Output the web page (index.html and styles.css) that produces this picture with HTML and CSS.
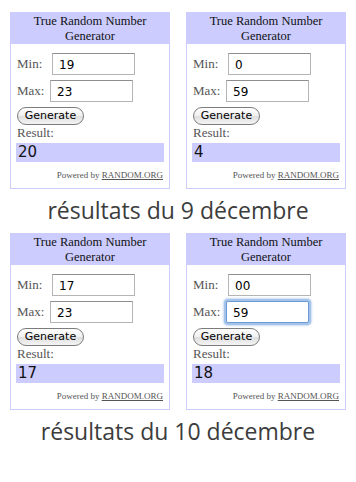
FILE: index.html
```html
<!DOCTYPE html>
<html lang="fr">
<head>
    <meta charset="UTF-8">
    <title>Tirage au sort</title>
    <link rel="stylesheet" href="styles.css">
</head>
<body>

<div class="page">
    <!-- 9 décembre -->
    <div class="row">
        <div class="rng">
            <div class="rng-head">True Random Number<br>Generator</div>
            <div class="rng-body">
                <div class="field"><span class="lbl">Min:</span><input class="num min" type="text" value="19"></div>
                <div class="field"><span class="lbl">Max:</span><input class="num" type="text" value="23"></div>
                <button class="gen">Generate</button>
                <div class="lbl res-lbl">Result:</div>
                <div class="result">20</div>
                <div class="powered">Powered by <a href="#">RANDOM.ORG</a></div>
            </div>
        </div>
        <div class="rng">
            <div class="rng-head">True Random Number<br>Generator</div>
            <div class="rng-body">
                <div class="field"><span class="lbl">Min:</span><input class="num min" type="text" value="0"></div>
                <div class="field"><span class="lbl">Max:</span><input class="num" type="text" value="59"></div>
                <button class="gen">Generate</button>
                <div class="lbl res-lbl">Result:</div>
                <div class="result">4</div>
                <div class="powered">Powered by <a href="#">RANDOM.ORG</a></div>
            </div>
        </div>
    </div>
    <p class="caption">résultats du 9 décembre</p>

    <!-- 10 décembre -->
    <div class="row">
        <div class="rng">
            <div class="rng-head">True Random Number<br>Generator</div>
            <div class="rng-body">
                <div class="field"><span class="lbl">Min:</span><input class="num min" type="text" value="17"></div>
                <div class="field"><span class="lbl">Max:</span><input class="num" type="text" value="23"></div>
                <button class="gen">Generate</button>
                <div class="lbl res-lbl">Result:</div>
                <div class="result">17</div>
                <div class="powered">Powered by <a href="#">RANDOM.ORG</a></div>
            </div>
        </div>
        <div class="rng">
            <div class="rng-head">True Random Number<br>Generator</div>
            <div class="rng-body">
                <div class="field"><span class="lbl">Min:</span><input class="num min" type="text" value="00"></div>
                <div class="field"><span class="lbl">Max:</span><input class="num focus" type="text" value="59"></div>
                <button class="gen">Generate</button>
                <div class="lbl res-lbl">Result:</div>
                <div class="result">18</div>
                <div class="powered">Powered by <a href="#">RANDOM.ORG</a></div>
            </div>
        </div>
    </div>
    <p class="caption">résultats du 10 décembre</p>
</div>

</body>
</html>
```

FILE: styles.css
```css
body {
    margin: 0;
    padding: 0;
    background: #ffffff;
}
.page {
    padding: 12px 10px 0 10px;
}
.row {
    display: flex;
    gap: 16px;
}
.rng {
    width: 160px;
    box-sizing: border-box;
    border: 1px solid #ccccff;
    font-family: "Liberation Serif", serif;
}
.rng-head {
    background-color: #ccccff;
    text-align: center;
    font-size: 12.5px;
    line-height: 15px;
    color: #111;
    padding: 1px 0 0 0;
    height: 30px;
}
.rng-body {
    padding: 9px 5px 8px 5px;
}
.field {
    display: flex;
    align-items: center;
    height: 22px;
    margin-bottom: 5px;
}
.lbl {
    font-size: 13px;
    color: #555;
    padding-left: 1px;
}
.field .lbl {
    width: 33px;
}
.num {
    width: 83px;
    height: 22px;
    box-sizing: border-box;
    border: 1px solid #b5b5b5;
    border-top-color: #8e8e8e;
    padding: 1px 6px 0 6px;
    font-family: "DejaVu Sans", sans-serif;
    font-size: 12px;
    color: #000;
    margin: 0;
}
.num.min {
    margin-left: 2px;
}
.num.focus {
    border-color: #6d9bd6;
    box-shadow: 0 0 0 2px #a4c3ea, 0 0 2px 3px #c9dcf3;
    border-radius: 2px;
    outline: none;
}
.gen {
    display: block;
    height: 18px;
    width: 67px;
    margin: 0 0 1px 1px;
    padding: 0;
    border: 1px solid #7c7c7c;
    border-radius: 9px;
    background: linear-gradient(#ffffff, #f0f0f0 50%, #dedede 51%, #f4f4f4);
    font-family: "DejaVu Sans", sans-serif;
    font-size: 11px;
    color: #000;
    line-height: 16px;
}
.res-lbl {
    line-height: 14px;
    margin-top: 1px;
}
.result {
    margin-top: 3px;
    height: 19px;
    background-color: #ccccff;
    font-family: "DejaVu Sans", sans-serif;
    font-size: 15px;
    line-height: 19px;
    color: #111;
    padding-left: 2px;
}
.powered {
    margin-top: 8px;
    text-align: right;
    font-size: 9px;
    color: #555;
    padding-right: 1px;
}
.powered a {
    color: #555;
}
.caption {
    margin: 0;
    height: 44px;
    text-align: center;
    font-family: "Open Sans", sans-serif;
    font-size: 23px;
    line-height: 42px;
    color: #3c3c3c;
}
```
